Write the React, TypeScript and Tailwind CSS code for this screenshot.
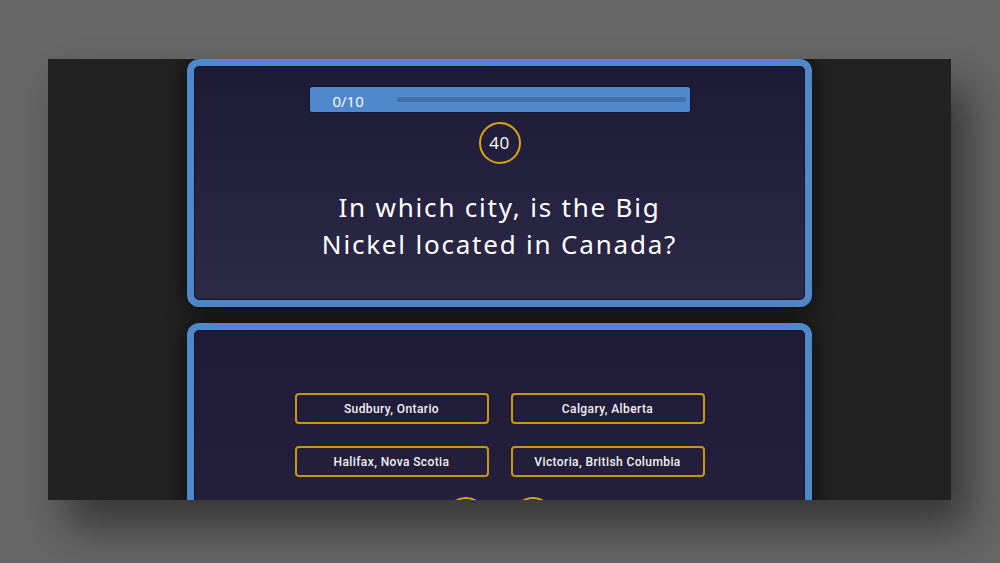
const answers = ['Sudbury, Ontario', 'Calgary, Alberta', 'Halifax, Nova Scotia', 'Victoria, British Columbia']

const App = () => {
  return (
    <div className="w-[1000px] h-[563px] bg-[#666666] overflow-hidden pt-[59px] pl-[48px]">
      {/* Stage */}
      <div className="w-[903px] h-[441px] bg-[#222222] overflow-hidden flex flex-col items-center gap-[16px] shadow-[18px_28px_40px_rgba(0,0,0,0.45)]">
        {/* Question card */}
        <div className="shrink-0 w-[625px] h-[248px] rounded-[12px] border-[7px] border-[#4f88cb] bg-gradient-to-b from-[#1d1a36] to-[#2d2a48] shadow-[0_0_22px_rgba(0,0,0,0.75),inset_0_0_0_1px_#14112a] flex flex-col items-center pt-[21px]">
          <div className="w-[380px] h-[25px] rounded-[2px] bg-[#5088cb] flex items-center pl-[23px] pr-[4px] gap-[33px] shadow-[0_0_0_1px_#171430]">
            <span className="pt-[4px] text-[15px] text-white font-['Open_Sans',sans-serif]">0/10</span>
            <div className="flex-1 h-[5px] rounded-full bg-[#4171ad]" />
          </div>
          <div className="mt-[10px] w-[42px] h-[42px] rounded-full border-2 border-[#dba513] flex items-center justify-center text-[17px] text-white font-['Open_Sans',sans-serif] tracking-[0.5px]">
            40
          </div>
          <h1 className="mt-[25px] text-center text-[26px] leading-[37px] text-white tracking-[1.8px] font-['Noto_Sans',sans-serif]">
            In which city, is the Big
            <br />
            Nickel located in Canada?
          </h1>
        </div>

        {/* Answers card */}
        <div className="shrink-0 w-[625px] h-[260px] rounded-[12px] border-[7px] border-[#4f88cb] bg-gradient-to-b from-[#1e1a37] to-[#27233f] shadow-[0_0_22px_rgba(0,0,0,0.75),inset_0_0_0_1px_#14112a] flex flex-col items-center pt-[63px]">
          <div className="grid grid-cols-[194px_194px] gap-[22px]">
            {answers.map(a => (
              <button
                key={a}
                className="h-[31px] rounded-[4px] border-2 border-[#c8960f] text-[#f2f2f2] text-[12px] font-medium tracking-[0.4px] font-['Roboto',sans-serif]"
              >
                {a}
              </button>
            ))}
          </div>
          <div className="mt-[20px] flex gap-[25px]">
            <div className="w-[42px] h-[42px] rounded-full border-2 border-[#dba513]" />
            <div className="w-[42px] h-[42px] rounded-full border-2 border-[#dba513]" />
          </div>
        </div>
      </div>
    </div>
  )
}

export default App
